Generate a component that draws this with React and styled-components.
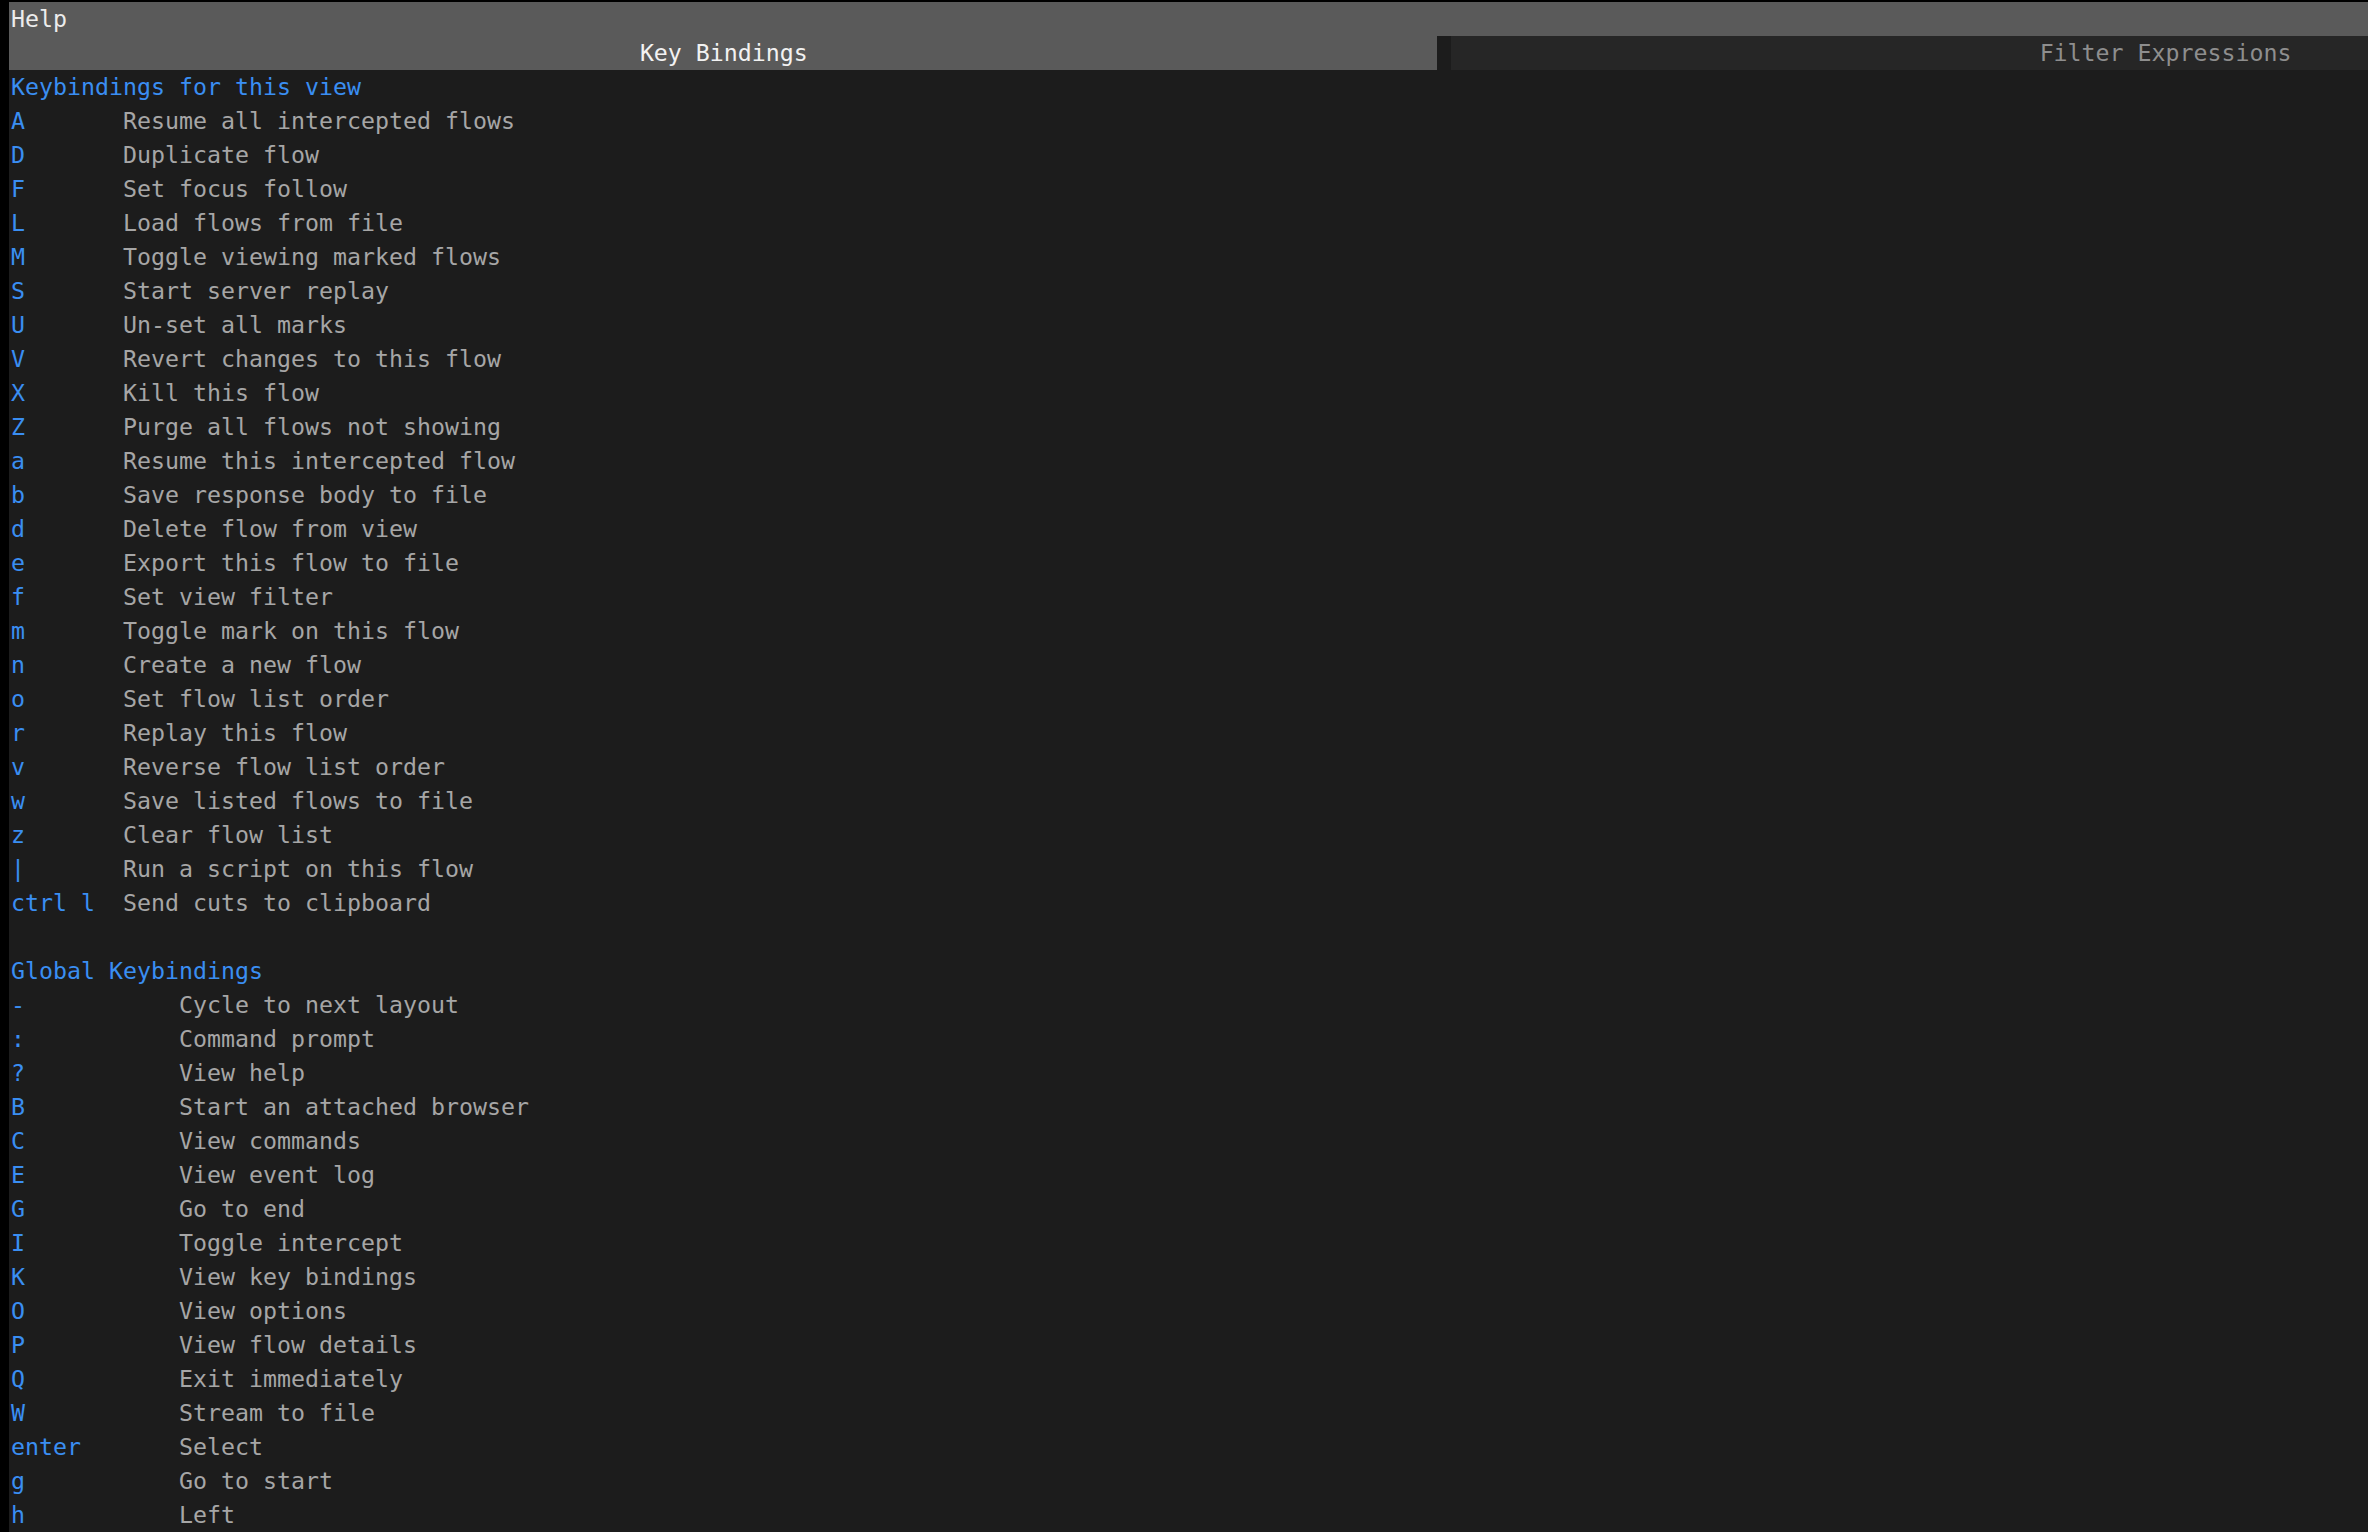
import React from 'react';
import styled, { createGlobalStyle } from 'styled-components';

const GlobalStyle = createGlobalStyle`
  html, body {
    margin: 0;
    padding: 0;
    background: #000;
    height: 100%;
    overflow: hidden;
  }
`;

const Terminal = styled.div`
  margin: 2px 0 0 9px;
  height: 1530px;
  background: #1c1c1c;
  font-family: "DejaVu Sans Mono", "Liberation Mono", monospace;
  font-size: 23.25px;
  line-height: 34px;
  color: #a4a4a4;
  white-space: pre;
  text-indent: 2px;
  overflow: hidden;
`;

const TitleBar = styled.div`
  height: 34px;
  background: #5a5a5a;
  color: #ececec;
`;

const TabBar = styled.div`
  display: flex;
  height: 34px;
  background: #5a5a5a;
  overflow: hidden;
`;

const Tab = styled.div`
  flex: 0 0 102ch;
  text-align: center;
  background: ${p => (p.$active ? '#5a5a5a' : '#262626')};
  color: ${p => (p.$active ? '#f2f2f2' : '#8e8e8e')};
`;

const TabGap = styled.div`
  flex: 0 0 1ch;
  background: #1c1c1c;
`;

const Section = styled.div`
  display: flex;
  flex-direction: column;
`;

const Heading = styled.div`
  color: #3a8ef2;
  height: 34px;
`;

const Row = styled.div`
  display: grid;
  grid-template-columns: ${p => p.$keyWidth}ch 1fr;
  height: 34px;
`;

const Key = styled.span`
  color: #3a8ef2;
`;

const Desc = styled.span`
  color: #a6a6a6;
`;

const Blank = styled.div`
  height: 34px;
`;

const viewBindings = [
  ['A', 'Resume all intercepted flows'],
  ['D', 'Duplicate flow'],
  ['F', 'Set focus follow'],
  ['L', 'Load flows from file'],
  ['M', 'Toggle viewing marked flows'],
  ['S', 'Start server replay'],
  ['U', 'Un-set all marks'],
  ['V', 'Revert changes to this flow'],
  ['X', 'Kill this flow'],
  ['Z', 'Purge all flows not showing'],
  ['a', 'Resume this intercepted flow'],
  ['b', 'Save response body to file'],
  ['d', 'Delete flow from view'],
  ['e', 'Export this flow to file'],
  ['f', 'Set view filter'],
  ['m', 'Toggle mark on this flow'],
  ['n', 'Create a new flow'],
  ['o', 'Set flow list order'],
  ['r', 'Replay this flow'],
  ['v', 'Reverse flow list order'],
  ['w', 'Save listed flows to file'],
  ['z', 'Clear flow list'],
  ['|', 'Run a script on this flow'],
  ['ctrl l', 'Send cuts to clipboard'],
];

const globalBindings = [
  ['-', 'Cycle to next layout'],
  [':', 'Command prompt'],
  ['?', 'View help'],
  ['B', 'Start an attached browser'],
  ['C', 'View commands'],
  ['E', 'View event log'],
  ['G', 'Go to end'],
  ['I', 'Toggle intercept'],
  ['K', 'View key bindings'],
  ['O', 'View options'],
  ['P', 'View flow details'],
  ['Q', 'Exit immediately'],
  ['W', 'Stream to file'],
  ['enter', 'Select'],
  ['g', 'Go to start'],
  ['h', 'Left'],
];

function BindingList({ title, bindings, keyWidth }) {
  return (
    <Section>
      <Heading>{title}</Heading>
      {bindings.map(([key, desc]) => (
        <Row key={key} $keyWidth={keyWidth}>
          <Key>{key}</Key>
          <Desc>{desc}</Desc>
        </Row>
      ))}
    </Section>
  );
}

export default function App() {
  return (
    <>
      <GlobalStyle />
      <Terminal>
        <TitleBar>Help</TitleBar>
        <TabBar>
          <Tab $active>Key Bindings</Tab>
          <TabGap />
          <Tab>Filter Expressions</Tab>
        </TabBar>
        <BindingList title="Keybindings for this view" bindings={viewBindings} keyWidth={8} />
        <Blank />
        <BindingList title="Global Keybindings" bindings={globalBindings} keyWidth={12} />
      </Terminal>
    </>
  );
}
